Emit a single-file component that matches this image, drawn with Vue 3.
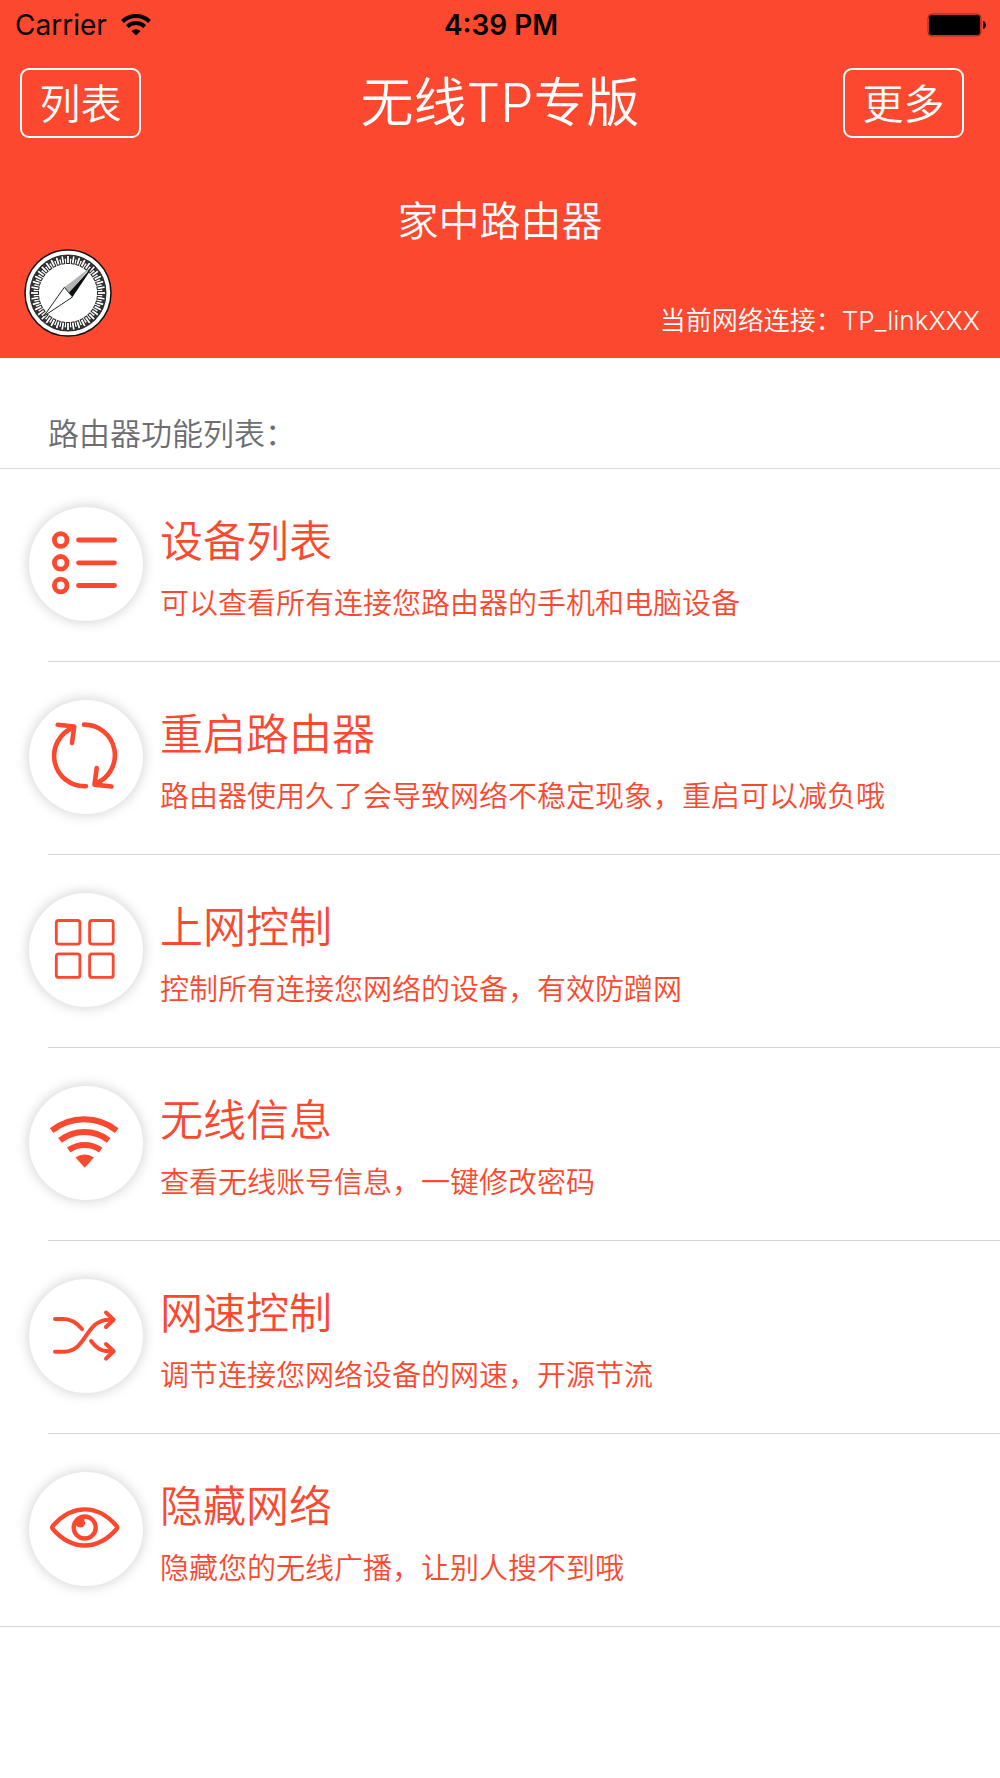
<script setup>
const networkName = 'TP_linkXXX'

const features = [
  { icon: 'list', title: '设备列表', desc: '可以查看所有连接您路由器的手机和电脑设备' },
  { icon: 'restart', title: '重启路由器', desc: '路由器使用久了会导致网络不稳定现象，重启可以减负哦' },
  { icon: 'grid', title: '上网控制', desc: '控制所有连接您网络的设备，有效防蹭网' },
  { icon: 'wifi', title: '无线信息', desc: '查看无线账号信息，一键修改密码' },
  { icon: 'shuffle', title: '网速控制', desc: '调节连接您网络设备的网速，开源节流' },
  { icon: 'eye', title: '隐藏网络', desc: '隐藏您的无线广播，让别人搜不到哦' }
]

const ticks = Array.from({ length: 40 }, (_, i) => i * 9)
</script>

<template>
  <div class="page">
    <header class="header">
      <div class="status-bar">
        <div class="carrier">
          <span>Carrier</span>
          <svg class="signal" viewBox="0 0 30 22" aria-hidden="true">
            <path d="M1.5 7.5 A19.5 19.5 0 0 1 28.5 7.5" />
            <path d="M6.3 12.6 A12.6 12.6 0 0 1 23.7 12.6" />
            <path class="solid" d="M10.4 17 A6.8 6.8 0 0 1 19.6 17 L15 21.6 Z" />
          </svg>
        </div>
        <span class="clock">4:39 PM</span>
        <svg class="battery" viewBox="0 0 60 24" aria-hidden="true">
          <rect class="shell" x="1" y="1" width="53" height="22" rx="4" />
          <rect x="2" y="2" width="51" height="20" rx="3" />
          <path d="M56 8 C60 9 60 15 56 16 Z" />
        </svg>
      </div>

      <nav class="nav">
        <button class="nav-btn" type="button">列表</button>
        <h1>无线TP专版</h1>
        <button class="nav-btn more" type="button">更多</button>
      </nav>

      <h2 class="router-name">家中路由器</h2>

      <div class="connection">
        <svg class="compass" viewBox="0 0 88 88" aria-hidden="true">
          <circle cx="44" cy="44" r="43" fill="#fff" stroke="#111" stroke-width="1.5" />
          <circle cx="44" cy="44" r="36.5" fill="none" stroke="#33373b" stroke-width="4" />
          <g v-for="angle in ticks" :key="angle" :transform="`rotate(${angle} 44 44)`">
            <rect x="42.6" y="6.5" width="2.8" height="8" fill="#fff" stroke="#222" stroke-width="1" />
          </g>
          <path d="M67 18 L40.3 38.3 L45 43.5 Z" fill="#b3b3b3" />
          <path d="M70 16 L45 43.5 L48.5 48 Z" fill="#0b0e12" />
          <path d="M40.3 38.3 L48.5 48 L20 67 Z" fill="#fff" stroke="#222" stroke-width="1" />
        </svg>
        <p>当前网络连接：{{ networkName }}</p>
      </div>
    </header>

    <main>
      <h3 class="list-label">路由器功能列表：</h3>

      <ul class="feature-list">
        <li v-for="item in features" :key="item.icon">
          <a class="feature" href="#">
            <span class="feature-icon">
              <svg viewBox="0 0 114 114" aria-hidden="true">
                <g v-if="item.icon === 'list'" stroke-width="4.8">
                  <circle cx="31.7" cy="33" r="6.3" />
                  <circle cx="31.7" cy="55.8" r="6.3" />
                  <circle cx="31.7" cy="78.5" r="6.3" />
                  <path d="M49.5 33 H85.5 M49.5 55.8 H85.5 M49.5 78.5 H85.5" />
                </g>
                <g v-else-if="item.icon === 'restart'" stroke-width="4.6">
                  <path d="M57 86.2 A30.4 30.4 0 0 1 44.5 27.5" />
                  <path d="M28.7 24.7 L45.2 26.5 L43 43" />
                  <path d="M55 24.6 A30.5 30.5 0 0 1 66.5 83.5" />
                  <path d="M67.7 68 L65.5 84.6 L82.5 86.5" />
                </g>
                <g v-else-if="item.icon === 'grid'" stroke-width="2.8">
                  <rect x="27.3" y="27.5" width="23.6" height="23.6" rx="2.5" />
                  <rect x="60.6" y="27.5" width="23.6" height="23.6" rx="2.5" />
                  <rect x="27.3" y="60.8" width="23.6" height="23.6" rx="2.5" />
                  <rect x="60.6" y="60.8" width="23.6" height="23.6" rx="2.5" />
                </g>
                <g v-else-if="item.icon === 'wifi'" class="butt" stroke-width="6">
                  <path d="M22.7 44.6 A52.4 52.4 0 0 1 87.7 44.6" />
                  <path d="M31 54.3 A39.8 39.8 0 0 1 79.7 54.3" />
                  <path d="M39.7 64 A28 28 0 0 1 71.7 64" />
                  <path class="filled" d="M46.5 71.6 A15 15 0 0 1 64.9 71.6 L55.7 81.8 Z" />
                </g>
                <g v-else-if="item.icon === 'shuffle'" stroke-width="4">
                  <path d="M26 40 H34.5 C42 40 47.5 43.5 53 50" />
                  <path d="M26 72.7 H35 C58 72.7 56 40.7 80 40.7 H84" />
                  <path d="M77 33.5 L84.6 40.7 L77 48" />
                  <path d="M62 62 C67 68.5 71.5 72.3 80 72.3 H84" />
                  <path d="M77 65 L84.6 72.3 L77 79.6" />
                </g>
                <g v-else stroke-width="4.4">
                  <path d="M23.8 54 C43 31.8 68.5 31.8 87.6 54 Q88.8 55.5 87.6 57 C68.5 79 43 79 23.8 57 Q22.6 55.5 23.8 54 Z" />
                  <circle cx="55.7" cy="55.5" r="11" />
                  <path class="filled" d="M47 48 L56 46 Q54.5 48.5 56.3 50.5 C56 54 53.5 55.8 51 55.5 C48.5 55.2 47 54 46.5 52 Z" />
                </g>
              </svg>
            </span>
            <span class="feature-text">
              <strong>{{ item.title }}</strong>
              <span class="desc">{{ item.desc }}</span>
            </span>
          </a>
        </li>
      </ul>
    </main>
  </div>
</template>

<style>
body {
  margin: 0;
  background: #fff;
}
</style>

<style scoped>
.page {
  font-family: Inter, "Noto Sans CJK SC", sans-serif;
  font-weight: 350;
}

h1, h2, h3, p, ul {
  margin: 0;
  padding: 0;
  font-weight: inherit;
}

.header {
  background: #fd4830;
  color: #fff;
  padding-bottom: 21px;
}

.status-bar {
  display: grid;
  grid-template-columns: 1fr auto 1fr;
  align-items: center;
  height: 50px;
  padding: 0 13px 0 15px;
  color: #000;
  font-size: 28px;
}

.carrier {
  display: flex;
  align-items: center;
  gap: 14px;
  font-weight: 400;
}

.signal {
  width: 30px;
  height: 22px;
  fill: none;
  stroke: #000;
  stroke-width: 4;
}

.signal .solid {
  fill: #000;
  stroke: none;
}

.clock {
  font-weight: 600;
}

.battery {
  justify-self: end;
  width: 60px;
  height: 24px;
}

.battery .shell {
  fill: none;
  stroke: #8c281a;
}

.nav {
  display: grid;
  grid-template-columns: 1fr auto 1fr;
  align-items: center;
  padding: 18px 20px 0;
}

.nav h1 {
  font-size: 53px;
  line-height: 68px;
}

.nav-btn {
  justify-self: start;
  width: 121px;
  height: 70px;
  padding: 0 0 5px;
  border: 2px solid #fff;
  border-radius: 9px;
  background: transparent;
  color: #fff;
  font: inherit;
  font-size: 41px;
  cursor: pointer;
}

.nav-btn.more {
  justify-self: end;
  margin-right: 16px;
}

.router-name {
  margin-top: 55px;
  font-size: 41px;
  line-height: 56px;
  text-align: center;
}

.connection {
  display: flex;
  align-items: flex-end;
  justify-content: space-between;
  padding: 0 20px 0 24px;
}

.connection p {
  font-size: 26px;
  line-height: 32px;
}

.compass {
  width: 88px;
  height: 88px;
}

.list-label {
  padding: 52px 48px 10px;
  border-bottom: 1px solid #d9d9d9;
  color: #6d6d72;
  font-size: 31px;
  line-height: 48px;
}

.feature-list {
  list-style: none;
}

.feature-list li::after {
  content: "";
  display: block;
  height: 1px;
  margin-left: 48px;
  background: #d3d3d5;
}

.feature-list li:last-child::after {
  margin-left: 0;
}

.feature {
  display: flex;
  gap: 17px;
  padding: 38px 20px 37px 29px;
  color: #fd4830;
  text-decoration: none;
}

.feature-icon {
  flex: none;
  width: 114px;
  height: 114px;
  border-radius: 50%;
  background: #fff;
  box-shadow: 0 0 14px rgba(0, 0, 0, 0.2);
}

.feature-icon svg {
  display: block;
  fill: none;
  stroke: #fd4830;
  stroke-linecap: round;
  stroke-linejoin: round;
}

.feature-icon .butt {
  stroke-linecap: butt;
}

.feature-icon .filled {
  fill: #fd4830;
  stroke: none;
}

.feature-text {
  display: flex;
  flex-direction: column;
  gap: 9px;
}

.feature-text strong {
  font-size: 43px;
  font-weight: inherit;
  line-height: 68px;
}

.desc {
  font-size: 29px;
  line-height: 40px;
}
</style>
